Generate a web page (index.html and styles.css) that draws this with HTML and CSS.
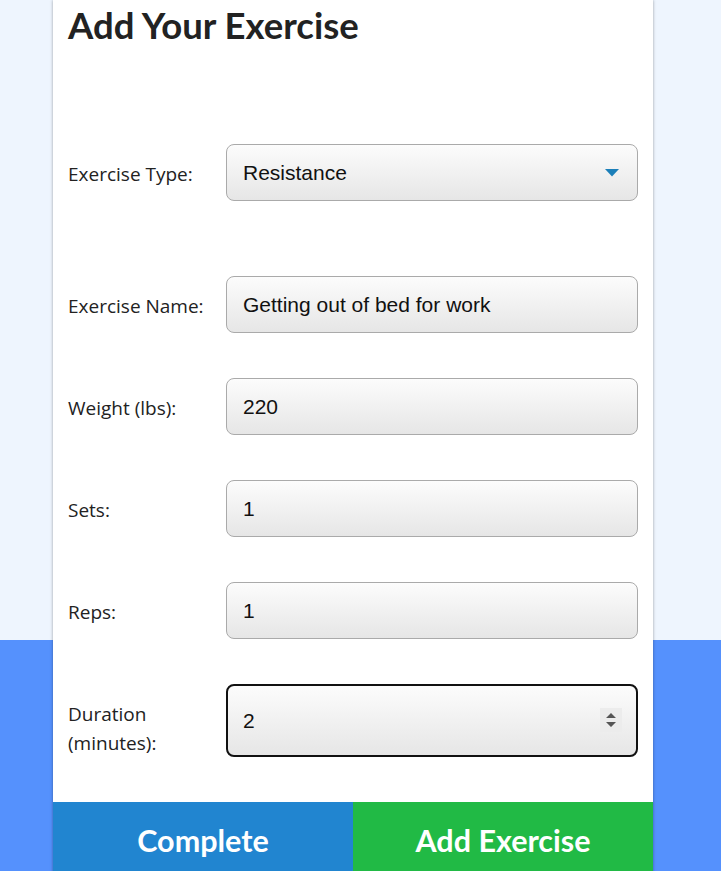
FILE: index.html
```html
<!DOCTYPE html>
<html lang="en">
<head>
<meta charset="utf-8">
<title>Add Your Exercise</title>
<link rel="stylesheet" href="styles.css">
</head>
<body>
<div class="page">
  <div class="card">
    <h1 class="title">Add Your Exercise</h1>
    <form class="form">
      <div class="row row-first">
        <label class="label">Exercise Type:</label>
        <div class="field select">
          <span class="value">Resistance</span>
          <svg class="arrow" width="14" height="8" viewBox="0 0 14 8"><path d="M0 0 H14 L7 7.5 Z" fill="#1b7fb9"/></svg>
        </div>
      </div>
      <div class="row">
        <label class="label">Exercise Name:</label>
        <input class="field" type="text" value="Getting out of bed for work">
      </div>
      <div class="row">
        <label class="label">Weight (lbs):</label>
        <input class="field" type="text" value="220">
      </div>
      <div class="row">
        <label class="label">Sets:</label>
        <input class="field" type="text" value="1">
      </div>
      <div class="row">
        <label class="label">Reps:</label>
        <input class="field" type="text" value="1">
      </div>
      <div class="row">
        <label class="label">Duration<br>(minutes):</label>
        <div class="field-wrap">
          <input class="field field-focus" type="text" value="2">
          <span class="spinner">
            <svg width="12" height="18" viewBox="0 0 12 18"><path d="M6 2 L11 7 H1 Z M1 11 H11 L6 16 Z" fill="#555"/></svg>
          </span>
        </div>
      </div>
    </form>
    <div class="actions">
      <button class="btn btn-blue" type="button">Complete</button>
      <button class="btn btn-green" type="button">Add Exercise</button>
    </div>
  </div>
</div>
</body>
</html>
```
FILE: styles.css
```css
html, body {
  margin: 0;
  padding: 0;
}
body {
  background: linear-gradient(to bottom, #eef5fe 0, #eef5fe 640px, #5591fd 640px, #5591fd 100%);
  min-height: 871px;
  overflow: hidden;
}
.page {
  padding-left: 53px;
}
.card {
  width: 600px;
  background: #fff;
  box-shadow: 0 0 3px rgba(0, 0, 0, 0.35);
  min-height: 871px;
  display: flex;
  flex-direction: column;
}
.title {
  font-family: Lato, "Open Sans", sans-serif;
  font-weight: 700;
  font-size: 36.5px;
  line-height: 43px;
  color: #222;
  margin: 4px 0 0 15px;
}
.form {
  padding: 0 14px 0 15px;
  display: flex;
  flex-direction: column;
  gap: 45px;
}
.row {
  display: grid;
  grid-template-columns: 158px 412px;
  align-items: start;
}
.row-first {
  margin-top: 97px;
  margin-bottom: 30px;
}
.label {
  font-family: "Open Sans", "Noto Sans", sans-serif;
  font-size: 19px;
  line-height: 29px;
  padding-top: 16px;
  color: #222;
}
.field {
  box-sizing: border-box;
  width: 412px;
  height: 57px;
  border: 1px solid #aaa;
  border-radius: 8px;
  background: linear-gradient(to bottom, #fcfcfc, #e6e6e6);
  font-family: "Liberation Sans", Arial, sans-serif;
  font-size: 21px;
  color: #111;
  padding: 0 16px;
  margin: 0;
  outline: none;
}
.select {
  display: flex;
  align-items: center;
  justify-content: space-between;
}
.value {
  padding-top: 1px;
}
.arrow {
  margin-right: 2px;
  margin-top: 1px;
}
.field-wrap {
  position: relative;
  width: 412px;
}
.field-focus {
  height: 73px;
  border: 2px solid #111;
  padding-left: 15px;
}
.spinner {
  position: absolute;
  right: 16px;
  top: 24px;
  width: 22px;
  height: 24px;
  background: #ececec;
  display: flex;
  align-items: center;
  justify-content: center;
}
.actions {
  display: flex;
  margin-top: 44px;
}
.btn {
  flex: 1;
  height: 78px;
  border: none;
  margin: 0;
  font-family: Lato, "Open Sans", sans-serif;
  font-weight: 700;
  font-size: 30.5px;
  color: #fff;
  padding: 0 0 3px;
}
.btn-blue {
  background: #2185d0;
}
.btn-green {
  background: #21ba45;
}
```
